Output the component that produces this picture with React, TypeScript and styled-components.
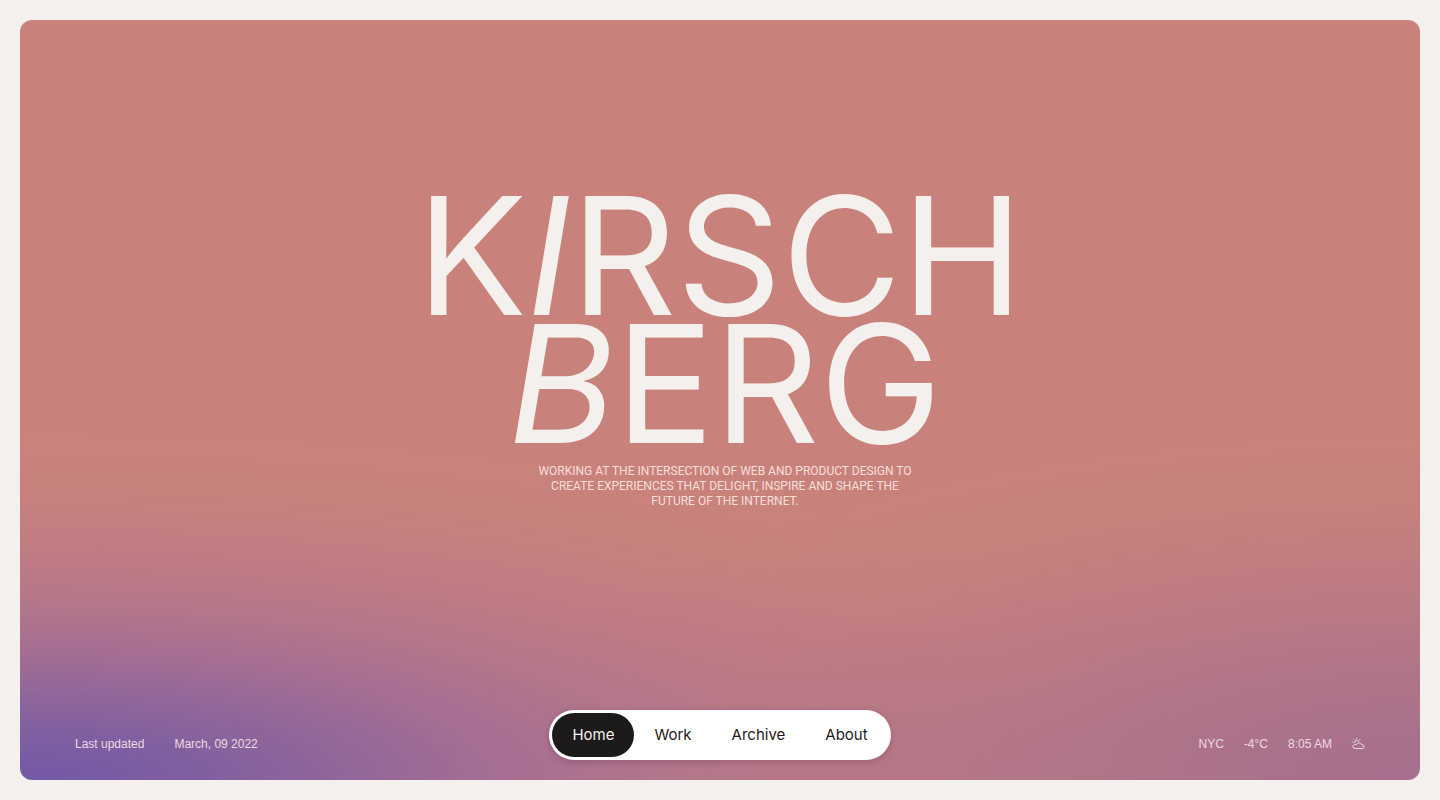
import styled, { createGlobalStyle } from "styled-components";

const GlobalStyle = createGlobalStyle`
  *, *::before, *::after { box-sizing: border-box; }
  html { background: #f4f0ee; }
  body {
    margin: 0;
    font-family: Inter, "Liberation Sans", Arial, sans-serif;
    color: #f4f0ee;
    -webkit-font-smoothing: antialiased;
  }
`;

const Page = styled.div`
  min-height: 100vh;
  padding: 20px;
  display: flex;
`;

const Canvas = styled.div`
  flex: 1;
  display: flex;
  flex-direction: column;
  border-radius: 12px;
  background:
    radial-gradient(ellipse 68% 46% at 100% 100%, rgba(156, 106, 146, 0.8) 0%, rgba(156, 106, 146, 0.68) 20%, rgba(156, 106, 146, 0.48) 40%, rgba(156, 106, 146, 0.3) 54%, rgba(156, 106, 146, 0.09) 76%, rgba(156, 106, 146, 0) 100%),
    radial-gradient(ellipse 92% 46% at 0% 100%, #7258a6 0%, #7f5fa1 13%, #8f669b 24%, #a46d93 36%, #b3768a 50%, #be7b83 64%, #c7817d 84%, #c9827b 100%);
`;

const Hero = styled.main`
  flex: 1;
  display: flex;
  flex-direction: column;
  align-items: center;
  padding: 172px 20px 40px;
  text-align: center;
`;

const Title = styled.h1`
  margin: 0;
  font-size: 164px;
  line-height: 128px;
  font-weight: 400;
`;

const Line = styled.span<{ $indent?: boolean }>`
  display: block;
  padding-left: ${(p) => (p.$indent ? 10 : 0)}px;
`;

const Intro = styled.p`
  margin: 16px 0 0;
  padding-left: 10px;
  max-width: 400px;
  font-family: Roboto, "Liberation Sans", Arial, sans-serif;
  font-size: 12px;
  line-height: 15px;
  text-transform: uppercase;
  color: #f8dfdb;
`;

const Footer = styled.footer`
  display: grid;
  grid-template-columns: 1fr auto 1fr;
  align-items: end;
  padding: 0 55px 20px;
`;

const Meta = styled.div<{ $end?: boolean }>`
  display: flex;
  align-items: center;
  justify-content: ${(p) => (p.$end ? "flex-end" : "flex-start")};
  gap: ${(p) => (p.$end ? 20 : 30)}px;
  padding-bottom: 8px;
  font-family: "Liberation Sans", Arial, sans-serif;
  font-size: 12px;
  line-height: 16px;
  color: #efd9e2;
`;

const Nav = styled.nav`
  display: flex;
  padding: 3px;
  border-radius: 25px;
  background: #fff;
  box-shadow: 0 2px 6px rgba(60, 20, 50, 0.22);
`;

const NavLink = styled.a<{ $active?: boolean }>`
  padding: 0 20px;
  border-radius: 22px;
  font-size: 15px;
  line-height: 44px;
  text-decoration: none;
  background: ${(p) => (p.$active ? "#1d1a1b" : "transparent")};
  color: ${(p) => (p.$active ? "#f4f0ee" : "#1d1a1b")};
`;

const links = ["Home", "Work", "Archive", "About"];

function WeatherIcon() {
  return (
    <svg width="13" height="12" viewBox="0 0 13 12" fill="none" stroke="currentColor" strokeWidth="1" strokeLinecap="round" strokeLinejoin="round" role="img" aria-label="Partly cloudy">
      <path d="M2.8 10.5a2 2 0 0 1-.4-3.900L5 6.200a2.500 2.500 0 0 1 4.600.6 1.900 1.900 0 1 1 .8 3.700z" />
      <path d="M2.400 4.700a2.500 2.500 0 0 1 4.500-1.100" />
      <path d="M4.700.5v.6M1.500 1.700l.5.5M.6 4.200h.5M7.800 1.500l-.4.5" />
    </svg>
  );
}

export default function App() {
  return (
    <Page>
      <GlobalStyle />
      <Canvas>
        <Hero>
          <Title>
            <Line>K<em>I</em>RSCH</Line>
            <Line $indent><em>B</em>ERG</Line>
          </Title>
          <Intro>
            Working at the intersection of web and product design to create
            experiences that delight, inspire and shape the future of the internet.
          </Intro>
        </Hero>
        <Footer>
          <Meta>
            <span>Last updated</span>
            <time dateTime="2022-03-09">March, 09 2022</time>
          </Meta>
          <Nav aria-label="Main">
            {links.map((label, i) => (
              <NavLink key={label} href={"#" + label.toLowerCase()} $active={i === 0} aria-current={i === 0 ? "page" : undefined}>
                {label}
              </NavLink>
            ))}
          </Nav>
          <Meta $end>
            <span>NYC</span>
            <span>-4°C</span>
            <time dateTime="08:05">8:05 AM</time>
            <WeatherIcon />
          </Meta>
        </Footer>
      </Canvas>
    </Page>
  );
}
